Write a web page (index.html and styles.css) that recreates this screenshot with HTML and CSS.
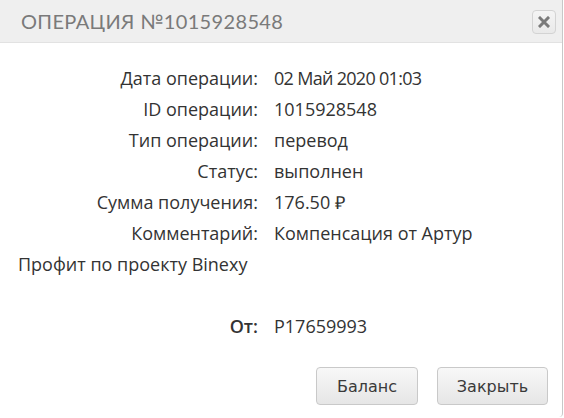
FILE: index.html
```html
<!DOCTYPE html>
<html lang="ru">
<head>
<meta charset="utf-8">
<title>Операция</title>
<link rel="stylesheet" href="styles.css">
</head>
<body>
<div class="dialog">
  <div class="titlebar">
    <span class="title">Операция №1015928548</span>
    <button class="close" aria-label="close">
      <svg width="12" height="12" viewBox="0 0 12 12"><path d="M2 2 L10 10 M10 2 L2 10" stroke="#7a7a7a" stroke-width="3" stroke-linecap="square"/></svg>
    </button>
  </div>
  <div class="content">
    <div class="details">
      <div class="label">Дата операции:</div><div class="value date">02 Май 2020 01:03</div>
      <div class="label">ID операции:</div><div class="value">1015928548</div>
      <div class="label">Тип операции:</div><div class="value">перевод</div>
      <div class="label">Статус:</div><div class="value">выполнен</div>
      <div class="label">Сумма получения:</div><div class="value">176.50 ₽</div>
      <div class="label">Комментарий:</div><div class="value">Компенсация от Артур</div>
      <div class="full">Профит по проекту Binexy</div>
      <div class="full"></div>
      <div class="label from">От:</div><div class="value">P17659993</div>
    </div>
  </div>
  <div class="buttons">
    <button class="btn btn-balance">Баланс</button>
    <button class="btn btn-close">Закрыть</button>
  </div>
</div>
</body>
</html>
```

FILE: styles.css
```css
html, body {
  margin: 0;
  padding: 0;
  background: #ffffff;
}
.dialog {
  width: 562px;
  height: 417px;
  background: #ffffff;
  border-right: 1px solid #c8c8c8;
  border-bottom-right-radius: 4px;
  display: flex;
  flex-direction: column;
  box-sizing: content-box;
}
.titlebar {
  height: 42px;
  background: #efefef;
  border-bottom: 1px solid #e2e2e2;
  display: flex;
  align-items: center;
  justify-content: space-between;
  padding: 0 6px 0 21px;
}
.title {
  font-family: "Lato", sans-serif;
  font-size: 20px;
  font-weight: 400;
  text-transform: uppercase;
  letter-spacing: 0.35px;
  color: #7a7a7a;
}
.close {
  width: 24px;
  height: 24px;
  padding: 0;
  margin: 2px 0 0 0;
  border: 1px solid #d3d3d3;
  border-radius: 4px;
  background: linear-gradient(#f4f4f4, #e9e9e9);
  display: flex;
  align-items: center;
  justify-content: center;
}
.content {
  padding: 19px 0 0 18px;
}
.details {
  display: grid;
  grid-template-columns: 240px auto;
  grid-auto-rows: 31px;
  column-gap: 16px;
  align-items: center;
  font-family: "Open Sans", sans-serif;
  font-size: 18px;
  color: #333333;
}
.label {
  text-align: right;
}
.date {
  letter-spacing: -0.7px;
}
.full {
  grid-column: 1 / 3;
}
.from {
  font-weight: 600;
}
.buttons {
  display: flex;
  justify-content: flex-end;
  gap: 19px;
  padding: 26px 14px 0 0;
}
.btn {
  height: 38px;
  font-family: "DejaVu Sans", sans-serif;
  font-size: 16px;
  color: #3a3a3a;
  border: 1px solid #c9c9c9;
  border-radius: 4px;
  background: linear-gradient(#f8f8f8, #e6e6e6);
  padding: 0;
}
.btn-balance { width: 102px; }
.btn-close { width: 111px; }
```
